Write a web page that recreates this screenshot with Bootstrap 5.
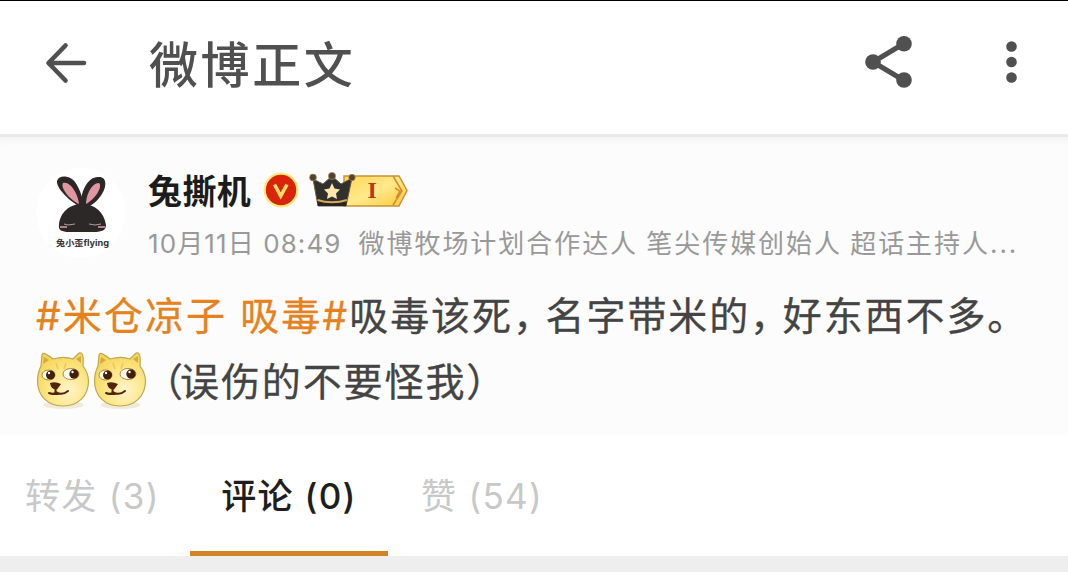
<!DOCTYPE html>
<html lang="zh-CN">
<head>
  <meta charset="UTF-8">
  <meta name="viewport" content="width=device-width, initial-scale=1">
  <title>微博正文</title>
  <link href="https://cdn.jsdelivr.net/npm/bootstrap@5.3.3/dist/css/bootstrap.min.css" rel="stylesheet">
  <style>
    body {
      font-family: Inter, "Noto Sans CJK SC", sans-serif;
      background-color: #eee;
      color: #444;
      height: 572px;
      overflow: hidden;
      white-space: nowrap;
    }
    .top-bar {
      height: 134px;
      padding: 0 46px 10px 45px;
      border-top: 1px solid #000;
      background-color: #fff;
      color: #505050;
    }
    .top-title {
      font-size: 49px;
      font-weight: 500;
      letter-spacing: 2.6px;
      line-height: 60px;
      padding-top: 6px;
      margin-left: 61px;
    }
    .icon-share { margin-right: 88px; }
    .post {
      height: 301px;
      background-color: #fcfcfc;
      border-top: 3px solid #e9e9e9;
      box-shadow: inset 0 8px 8px -6px #f0f0f0;
      padding: 31px 36px 0;
    }
    .avatar {
      width: 90px;
      height: 90px;
      background-color: #fff;
      margin-right: 22px;
    }
    .user-name {
      font-size: 34px;
      font-weight: 700;
      line-height: 44px;
      padding-top: 2px;
      color: #1c1c1c;
      letter-spacing: .4px;
    }
    .icon-verified { margin-left: 11px; }
    .icon-level { margin-left: 9px; }
    .meta {
      font-size: 26px;
      line-height: 40px;
      color: #999;
      margin-top: 10px;
    }
    .meta-date { letter-spacing: 1.1px; }
    .meta-text { letter-spacing: 1.95px; word-spacing: -1px; margin-left: 17px; }
    .post-line {
      font-size: 39px;
      line-height: 56px;
      letter-spacing: 1.9px;
      -webkit-text-stroke: .3px;
    }
    .post-first { margin-top: 24px; }
    .post-second { margin-top: 6px; }
    .topic {
      color: #e6821e;
      letter-spacing: 2.1px;
    }
    .comma { letter-spacing: -6.3px; }
    .paren-open { letter-spacing: -3px; margin-left: -6px; }
    .tab-row {
      height: 121px;
      background-color: #fff;
      font-size: 35px;
      letter-spacing: 1.3px;
    }
    .tab-item {
      height: 121px;
      line-height: 122px;
      color: #c8c8c8;
      border-bottom: 5px solid transparent;
    }
    .tab-item.current {
      width: 198px;
      color: #1e1e1e;
      font-weight: 500;
      border-color: #d48427;
    }
    .tab-first { width: 190px; padding-left: 25px; }
    .tab-last { padding-left: 33px; }
  </style>
</head>
<body>

<header class="top-bar d-flex align-items-center">
  <svg width="43" height="42" viewBox="0 0 43 42" fill="none" stroke="#505050" stroke-width="4.6" stroke-linecap="round" stroke-linejoin="round">
    <path d="M20.500 3.500L3.500 21L20.500 38.500M4 21H39"/>
  </svg>
  <h1 class="top-title mb-0">微博正文</h1>
  <svg class="icon-share ms-auto" width="48" height="54" viewBox="0 0 48 54" fill="#505050">
    <path d="M40 7.500L9 26L40 44.500" fill="none" stroke="#505050" stroke-width="5"/>
    <circle cx="9" cy="26" r="7.800"/>
    <circle cx="40" cy="7.800" r="7.800"/>
    <circle cx="40" cy="44" r="7.800"/>
  </svg>
  <svg width="22" height="44" viewBox="0 0 22 44" fill="#505050">
    <circle cx="11.500" cy="5.500" r="5.300"/>
    <circle cx="11.500" cy="21" r="5.300"/>
    <circle cx="11.500" cy="36.500" r="5.300"/>
  </svg>
</header>

<main class="post">
  <div class="d-flex">
    <!-- Rabbit avatar -->
    <svg class="avatar rounded-circle" viewBox="0 0 90 90">
      <g fill="#2d2828">
        <path d="M45 39C34 34 20 20 21 13C23 6 35 8 39 14C44 21 47 31 48 38Z"/>
        <path d="M45 39C44 25 51 9 62 9C71 8 71 18 66 26C61 34 55 38 49 40Z"/>
        <path d="M23 57C24 44 34 36 46 36C59 36 68 44 70 57C70 62 66 64 58 64H33C26 64 22 62 23 57Z"/>
      </g>
      <path d="M27 15C24 20 34 32 43 36C42 27 35 13 27 15Z" fill="#e296a2"/>
      <path d="M63 15C55 15 50 28 50 36C59 31 67 19 63 15Z" fill="#e296a2"/>
      <path d="M28 56L32 57L39 56M53 56L59 57L65 56" fill="none" stroke="#aaa09e" stroke-width="1"/>
      <path d="M24 59H31M62 59H69" stroke="#b87f85" stroke-width="2"/>
      <text x="20" y="78" font-size="8.500" font-weight="700" fill="#333" textLength="53" lengthAdjust="spacingAndGlyphs">兔小歪flying</text>
    </svg>
    <div>
      <div class="d-flex align-items-center">
        <span class="user-name">兔撕机</span>
        <!-- Verified mark -->
        <svg class="icon-verified" width="38" height="38" viewBox="0 0 38 38">
          <circle cx="19" cy="18" r="17.500" fill="#ffe978"/>
          <circle cx="19" cy="18" r="15.200" fill="#d9230b"/>
          <path d="M12.500 12.500L18.700 24L25 12.500" fill="none" stroke="#ffdb67" stroke-width="3.600"/>
        </svg>
        <!-- Crown level tag -->
        <svg class="icon-level" width="104" height="38" viewBox="0 0 104 38">
          <defs>
            <linearGradient id="gold" x1="0" y1="0" x2="1" y2="1">
              <stop offset="0" stop-color="#ffd752"/>
              <stop offset=".5" stop-color="#ffe98c"/>
              <stop offset="1" stop-color="#ffc83c"/>
            </linearGradient>
          </defs>
          <path d="M35 4H90L98 18.500L90 34H35Z" fill="url(#gold)" stroke="#c99032" stroke-width="1.500"/>
          <path d="M84 4L93 19L84 33M86 16L91 19L87 26" fill="none" stroke="#d68a2b" stroke-width="1.500"/>
          <path d="M4 7L14 12L23 4L32 12L43 6L37 34H9Z" fill="#30302f" stroke="#6e5a39" stroke-width="1"/>
          <path d="M8 28C17 31 29 31 38 28L37 34H9Z" fill="#252525"/>
          <path d="M8.500 28C17 31 29 31 38 28" fill="none" stroke="#d9aa52" stroke-width="2"/>
          <g fill="#4b4334" stroke="#a88747" stroke-width=".7">
            <circle cx="4" cy="5.500" r="3.400"/>
            <circle cx="23" cy="4" r="3.600"/>
            <circle cx="43" cy="5.500" r="3.200"/>
          </g>
          <path d="M23 11L25.500 16.500L31 17.500L27 21.500L28 27L23 24.500L18 27L19 21.500L15 17.500L20.500 16.500Z" fill="#ffe7ab"/>
          <text x="58.500" y="26" font-family="Liberation Serif, serif" font-size="24" font-weight="700" fill="#b63a19">I</text>
        </svg>
      </div>
      <div class="meta"><span class="meta-date">10月11日 08:49</span><span class="meta-text">微博牧场计划合作达人 笔尖传媒创始人 超话主持人...</span></div>
    </div>
  </div>
  <div class="post-line post-first"><span class="topic">#米仓凉子 吸毒#</span>吸毒该死<span class="comma">，</span>名字带米的<span class="comma">，</span>好东西不多。</div>
  <div class="post-line post-second d-flex align-items-center">
    <svg width="0" height="0" class="d-block">
      <defs>
        <radialGradient id="fur" cx=".6" cy=".7" r=".7">
          <stop offset="0" stop-color="#fff4cb"/>
          <stop offset=".5" stop-color="#fde88c"/>
          <stop offset="1" stop-color="#f6d659"/>
        </radialGradient>
      </defs>
      <symbol id="doge" viewBox="0 0 57 64">
        <ellipse cx="27.500" cy="55" rx="20" ry="4" fill="#f1e9d9"/>
        <path d="M5 16L6 5C7 2 9 3 17 9C24 7 31 7 37 9L43 3C46 2 48 4 47 16C50 20 52.500 25 52.500 31C52.500 46 42 56 27 56C12 56 1.500 46 1.500 31C1.500 25 3 20 5 16Z" fill="url(#fur)" stroke="#bca853" stroke-width="1.200"/>
        <path d="M7 14L8 7L13 10ZM40 9L45 6V13Z" fill="#d8a840"/>
        <path d="M20 13L22 19M30 13L28 19" stroke="#e8c861" stroke-width="1.500"/>
        <ellipse cx="12.500" cy="25" rx="6.500" ry="5" fill="#fffdf1" stroke="#977024" stroke-width=".8"/>
        <ellipse cx="35" cy="24" rx="8" ry="5.500" fill="#fffdf1" stroke="#977024" stroke-width=".8"/>
        <circle cx="14.500" cy="25" r="4.500" fill="#442009"/>
        <circle cx="38" cy="24" r="4.700" fill="#442009"/>
        <circle cx="13" cy="23" r="1.200" fill="#fff"/>
        <circle cx="36.500" cy="22" r="1.200" fill="#fff"/>
        <path d="M14 33Q19 31 25 34L21 39.500Q15 40 14 33Z" fill="#54230d"/>
        <path d="M13 43Q18 45 20 42Q26 46 32 41M19.500 38V42M16 44H22" fill="none" stroke="#54230d" stroke-width="2" stroke-linecap="round"/>
      </symbol>
    </svg>
    <svg width="57" height="64"><use href="#doge"/></svg>
    <svg width="57" height="64"><use href="#doge"/></svg>
    <div><span class="paren-open">（</span>误伤的不要怪我）</div>
  </div>
</main>

<nav class="tab-row d-flex">
  <div class="tab-item tab-first">转发 (3)</div>
  <div class="tab-item current text-center">评论 (0)</div>
  <div class="tab-item tab-last">赞 (54)</div>
</nav>

<script src="https://cdn.jsdelivr.net/npm/bootstrap@5.3.3/dist/js/bootstrap.bundle.min.js"></script>
</body>
</html>
